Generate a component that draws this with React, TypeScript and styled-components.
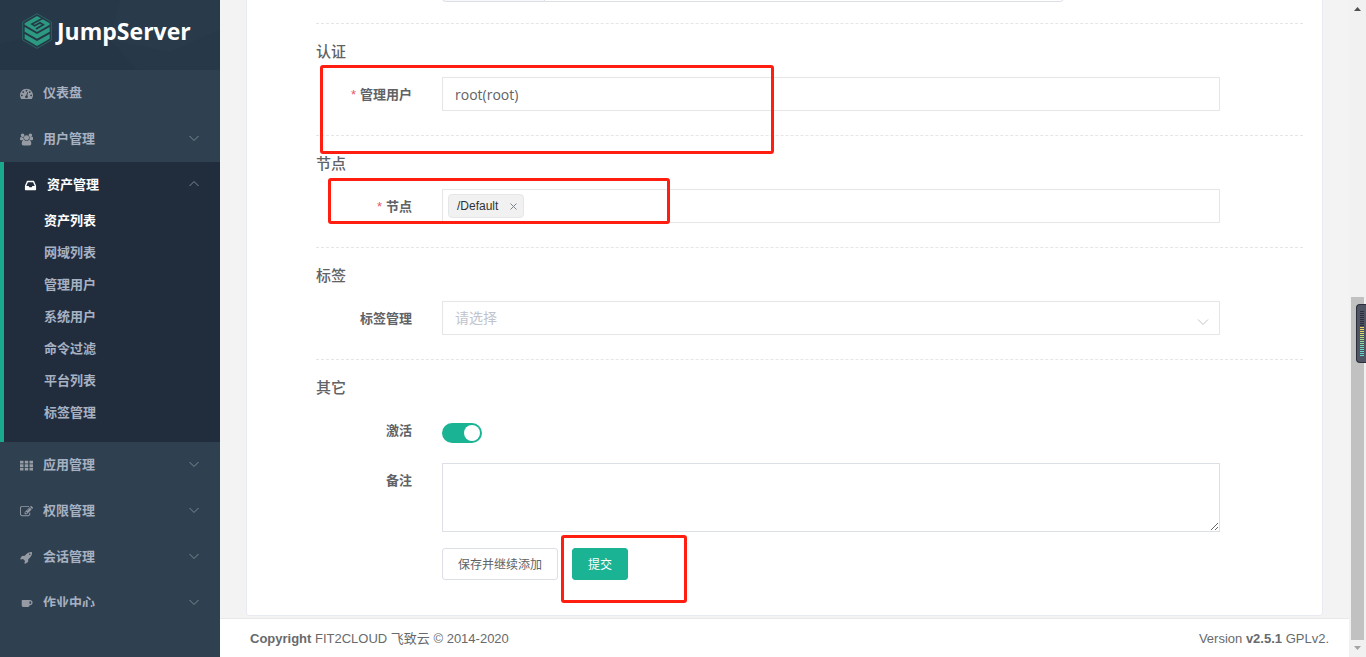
import React from "react";
import styled, { createGlobalStyle } from "styled-components";

const GlobalStyle = createGlobalStyle`
  *, *::before, *::after { box-sizing: border-box; }
  html, body, #root { height: 100%; }
  body {
    margin: 0;
    overflow: hidden;
    background: #f3f3f4;
    color: #606266;
    font-family: "Liberation Sans", "Noto Sans CJK SC", sans-serif;
    font-size: 13px;
  }
  button, input, select, textarea { font: inherit; color: inherit; }
`;

const Shell = styled.div`
  position: relative;
  display: flex;
  height: 100vh;
`;

/* Sidebar */

const Sidebar = styled.aside`
  display: flex;
  flex-direction: column;
  flex: 0 0 220px;
  padding-bottom: 50px;
  background: #2f4050;
`;

const Brand = styled.a`
  position: relative;
  display: flex;
  align-items: center;
  gap: 5px;
  flex: 0 0 70px;
  padding: 0 0 8px 22px;
  overflow: hidden;
  background: #273848;
  color: #fff;
  text-decoration: none;
`;

const BrandFacets = styled.svg`
  position: absolute;
  inset: 0;
  width: 100%;
  height: 100%;
`;

const BrandMark = styled.svg`
  position: relative;
  width: 30px;
  height: 36px;
`;

const BrandName = styled.span`
  position: relative;
  font-family: "Open Sans", "Noto Sans", sans-serif;
  font-size: 23px;
  font-weight: 700;
  line-height: 36px;
`;

const Menu = styled.nav`
  flex: 1 1 0;
  min-height: 0;
  overflow: hidden;
`;

const Group = styled.div<{ $active?: boolean }>`
  border-left: ${(p) => (p.$active ? "4px solid #19aa8d" : "0")};
  background: ${(p) => (p.$active ? "#212d3d" : "transparent")};
  padding-bottom: ${(p) => (p.$active ? "16px" : "0")};
`;

const GroupHead = styled.button<{ $active?: boolean }>`
  display: flex;
  align-items: center;
  gap: 9px;
  width: 100%;
  height: 46px;
  padding: 0 20px;
  border: 0;
  background: none;
  color: ${(p) => (p.$active ? "#fff" : "#a7b1c2")};
  font-weight: 600;
  text-align: left;
  cursor: pointer;
`;

const MenuIcon = styled.svg<{ $active?: boolean }>`
  width: 13px;
  height: 13px;
  margin-right: 1px;
  fill: ${(p) => (p.$active ? "#fff" : "#969ba3")};
`;

const GroupName = styled.span`
  flex: 1;
  padding-bottom: 3px;
`;

const Chevron = styled.svg`
  width: 12px;
  height: 12px;
  fill: none;
  stroke: #7d8790;
`;

const SubMenu = styled.ul`
  display: flex;
  flex-direction: column;
  gap: 6px;
  margin: 0;
  padding: 0 0 0 40px;
  list-style: none;
`;

const SubLink = styled.a<{ $active?: boolean }>`
  display: block;
  height: 26px;
  line-height: 26px;
  color: ${(p) => (p.$active ? "#fff" : "#a7b1c2")};
  font-weight: 600;
  text-decoration: none;
`;

/* Main column */

const Main = styled.main`
  display: flex;
  flex-direction: column;
  flex: 1;
  min-width: 0;
`;

const Viewport = styled.div`
  display: flex;
  flex-direction: column;
  justify-content: flex-end;
  flex: 1;
  min-height: 0;
  padding: 0 26px 2px;
  overflow: hidden;
`;

const Card = styled.form`
  flex: none;
  padding: 0 19px 35px 69px;
  border: 1px solid #e9ebf2;
  border-radius: 3px;
  background: #fff;
`;

const Section = styled.section`
  position: relative;
  border-top: 1px dashed #e4e6e9;
  padding-bottom: 24px;

  &:last-child { padding-bottom: 0; }
`;

const SectionTitle = styled.h3`
  margin: 17px 0 14px;
  font-size: 15px;
  font-weight: 500;
  line-height: 22px;
`;

const Row = styled.div`
  display: grid;
  grid-template-columns: 96px minmax(0, 1fr);
  column-gap: 30px;
  padding-right: 83px;

  & + & { margin-top: 16px; }
`;

const Label = styled.label<{ $required?: boolean }>`
  height: 34px;
  line-height: 36px;
  font-weight: 600;
  text-align: right;

  &::before {
    content: ${(p) => (p.$required ? '"*"' : "none")};
    margin-right: 4px;
    color: #ed5565;
    font-weight: 400;
  }
`;

const TextInput = styled.input`
  width: 100%;
  height: 34px;
  padding: 0 12px;
  border: 1px solid #e5e6e7;
  background: #fff;
  font-family: "Open Sans", "Noto Sans CJK SC", sans-serif;
  font-size: 14px;
  outline: 0;
`;

const TagBox = styled.div`
  display: flex;
  align-items: center;
  height: 34px;
  padding: 0 5px;
  border: 1px solid #e5e6e7;
`;

const Tag = styled.span`
  display: flex;
  align-items: center;
  gap: 11px;
  height: 24px;
  padding: 0 5px 0 8px;
  border: 1px solid #e5e6e7;
  border-radius: 4px;
  background: #f1f1f1;
  color: #303133;
  font-size: 12px;
`;

const TagClose = styled.button`
  display: flex;
  padding: 0;
  border: 0;
  background: none;
  color: #80848b;

  svg { width: 9px; height: 9px; fill: none; stroke: currentColor; }
`;

const TagInput = styled.input`
  flex: 1;
  min-width: 0;
  border: 0;
  background: none;
  outline: 0;
`;

const SelectWrap = styled.div`
  position: relative;
`;

const Select = styled.select`
  display: block;
  width: 100%;
  height: 34px;
  padding: 0 12px;
  border: 1px solid #e5e6e7;
  border-radius: 0;
  background: #fff;
  color: #c0c4cc;
  font-size: 14px;
  appearance: none;
`;

const SelectArrow = styled.svg`
  position: absolute;
  right: 11px;
  top: 15px;
  width: 12px;
  height: 12px;
  fill: none;
  stroke: #c0c4cc;
  pointer-events: none;
`;

const Protocol = styled.div`
  display: grid;
  grid-template-columns: 102px minmax(0, 520px);
  height: 34px;
  margin-bottom: 21px;
`;

const ProtocolName = styled.input`
  min-width: 0;
  border: 1px solid #dcdfe6;
  border-right: 0;
  border-radius: 4px 0 0 4px;
  background: #f5f7fa;
`;

const ProtocolPort = styled.input`
  min-width: 0;
  border: 1px solid #dcdfe6;
  border-radius: 0 4px 4px 0;
  background: #fff;
`;

const Toggle = styled.input`
  position: relative;
  width: 40px;
  height: 20px;
  margin: 10px 0 4px;
  border-radius: 10px;
  background: #1ab394;
  appearance: none;
  cursor: pointer;

  &::after {
    content: "";
    position: absolute;
    top: 2px;
    left: 2px;
    width: 16px;
    height: 16px;
    border-radius: 50%;
    background: #fff;
  }
  &:checked::after { left: 22px; }
  &:not(:checked) { background: #dcdfe6; }
`;

const TextArea = styled.textarea`
  display: block;
  width: 100%;
  height: 69px;
  padding: 5px 15px;
  border: 1px solid #dcdfe6;
  background: #fff;
  resize: vertical;
  outline: 0;
`;

const Actions = styled.div`
  position: relative;
  display: flex;
  gap: 14px;
  grid-column: 2;
`;

const Button = styled.button<{ $primary?: boolean }>`
  height: 32px;
  padding: 0 15px 2px;
  border: 1px solid ${(p) => (p.$primary ? "#1ab394" : "#dcdfe6")};
  border-radius: 3px;
  background: ${(p) => (p.$primary ? "#1ab394" : "#fff")};
  color: ${(p) => (p.$primary ? "#fff" : "#606266")};
  font-size: 12px;
  cursor: pointer;
`;

const Highlight = styled.div<{ $x: number; $y: number; $w: number; $h: number }>`
  position: absolute;
  z-index: 1;
  left: ${(p) => p.$x}px;
  top: ${(p) => p.$y}px;
  width: ${(p) => p.$w}px;
  height: ${(p) => p.$h}px;
  border: 3px solid #ff1e10;
  border-radius: 3px;
  pointer-events: none;
`;

const Footer = styled.footer`
  display: flex;
  justify-content: space-between;
  align-items: baseline;
  flex: 0 0 39px;
  padding: 9px 20px 0 30px;
  border-top: 1px solid #e7eaec;
  background: #fff;
  color: #676a6c;
`;

/* Window scroll bar and the level meter docked over it */

const ScrollTrack = styled.div`
  display: flex;
  flex-direction: column;
  align-items: center;
  flex: 0 0 17px;
  background: #f1f1f1;
`;

const ScrollArrow = styled.svg`
  flex: 0 0 17px;
  width: 17px;
`;

const ScrollLane = styled.div`
  display: flex;
  flex-direction: column;
  justify-content: flex-end;
  flex: 1;
`;

const ScrollThumb = styled.div`
  width: 13px;
  height: 55%;
  background: #c1c1c1;
`;

const Meter = styled.div`
  position: absolute;
  right: 0;
  top: calc(50% - 25px);
  display: flex;
  flex-direction: column;
  gap: 1px;
  width: 10px;
  height: 59px;
  padding: 6px 2px 6px 3px;
  border: 1px solid #2b2e3a;
  border-right: 0;
  border-radius: 4px 0 0 4px;
  background: #505563;
`;

const MeterBar = styled.span<{ $color: string }>`
  width: 4px;
  height: 1px;
  background: ${(p) => p.$color};
`;

type IconDef = { box: string; path: string };

const icons: Record<string, IconDef> = {
  dashboard: {
    box: "0 0 1792 1792",
    path: "M384 1152q0-53-37.5-90.5t-90.5-37.5-90.5 37.5-37.5 90.5 37.5 90.5 90.5 37.5 90.5-37.5 37.5-90.5zm192-448q0-53-37.5-90.5t-90.5-37.5-90.5 37.5-37.5 90.5 37.5 90.5 90.5 37.5 90.5-37.5 37.5-90.5zm428 481l101-382q6-26-7.5-48.5t-38.5-29.5-48 6.5-30 39.5l-101 382q-60 5-107 43.5t-63 98.5q-20 77 20 146t117 89 146-20 89-117q16-60-6-117t-72-91zm660-33q0-53-37.5-90.5t-90.5-37.5-90.5 37.5-37.5 90.5 37.5 90.5 90.5 37.5 90.5-37.5 37.5-90.5zm-640-640q0-53-37.5-90.5t-90.5-37.5-90.5 37.5-37.5 90.5 37.5 90.5 90.5 37.5 90.5-37.5 37.5-90.5zm448 192q0-53-37.5-90.5t-90.5-37.5-90.5 37.5-37.5 90.5 37.5 90.5 90.5 37.5 90.5-37.5 37.5-90.5zm320 448q0 261-141 483-19 29-54 29h-1402q-35 0-54-29-141-221-141-483 0-182 71-348t191-286 286-191 348-71 348 71 286 191 191 286 71 348z",
  },
  users: {
    box: "0 0 1920 1792",
    path: "M593 896q-162 5-265 128h-134q-82 0-138-40.5t-56-118.5q0-353 124-353 6 0 43.5 21t97.5 42.5 119 21.5q67 0 133-23-5 37-5 66 0 159 93 290zm1071 637q0 120-73 189.5t-194 69.5h-874q-121 0-194-69.5t-73-189.5q0-53 3.5-103.5t14-109 26.5-108.5 43-97.5 62-81 85.5-53.5 111.5-20q10 0 43 21.5t73 48 107 48 135 21.5 135-21.5 107-48 73-48 43-21.5q61 0 111.5 20t85.5 53.5 62 81 43 97.5 26.5 108.5 14 109 3.5 103.5zm-1024-1277q0 106-75 181t-181 75-181-75-75-181 75-181 181-75 181 75 75 181zm704 384q0 159-112.5 271.5t-271.5 112.5-271.5-112.5-112.5-271.5 112.5-271.5 271.5-112.5 271.5 112.5 112.5 271.5zm576 225q0 78-56 118.5t-138 40.5h-134q-103-123-265-128 93-131 93-290 0-29-5-66 66 23 133 23 59 0 119-21.5t97.5-42.5 43.5-21q124 0 124 353zm-128-609q0 106-75 181t-181 75-181-75-75-181 75-181 181-75 181 75 75 181z",
  },
  inbox: {
    box: "0 0 1536 1792",
    path: "M1023 960h316q-1-3-2.5-8.5t-2.5-7.5l-212-496h-708l-212 496q-1 3-2.5 8.5t-2.5 7.5h316l95 192h320zm513 30v482q0 26-19 45t-45 19h-1408q-26 0-45-19t-19-45v-482q0-62 25-123l238-552q10-25 36.5-42t52.5-17h832q26 0 52.5 17t36.5 42l238 552q25 61 25 123z",
  },
  grid: {
    box: "0 0 1792 1792",
    path: "M0 256h480v352h-480zM656 256h480v352h-480zM1312 256h480v352h-480zM0 736h480v352h-480zM656 736h480v352h-480zM1312 736h480v352h-480zM0 1216h480v352h-480zM656 1216h480v352h-480zM1312 1216h480v352h-480z",
  },
  edit: {
    box: "0 0 1792 1792",
    path: "M888 1184l116-116-152-152-116 116v56h96v96h56zm440-720q-16-16-33 1l-350 350q-17 17-1 33t33-1l350-350q17-17 1-33zm80 594v190q0 119-84.5 203.5t-203.5 84.5h-832q-119 0-203.5-84.5t-84.5-203.5v-832q0-119 84.5-203.5t203.5-84.5h832q63 0 117 25 15 7 18 23 3 17-9 29l-49 49q-14 14-32 8-23-6-45-6h-832q-66 0-113 47t-47 113v832q0 66 47 113t113 47h832q66 0 113-47t47-113v-126q0-13 9-22l64-64q15-15 35-7t20 29zm-96-738l288 288-672 672h-288v-288zm444 132l-92 92-288-288 92-92q28-28 68-28t68 28l152 152q28 28 28 68t-28 68z",
  },
  rocket: {
    box: "0 0 1792 1792",
    path: "M1440 448q0-40-28-68t-68-28-68 28-28 68 28 68 68 28 68-28 28-68zm224-288q0 249-75.5 430.5t-253.5 360.5q-81 80-195 176l-20 379q-2 16-16 26l-384 224q-7 4-16 4-12 0-23-9l-64-64q-13-14-8-32l85-276-281-281-276 85q-3 1-9 1-14 0-23-9l-64-64q-17-19-5-39l224-384q10-14 26-16l379-20q96-114 176-195 188-187 358-258t431-71q14 0 24 9.5t10 22.5z",
  },
  coffee: {
    box: "0 -128 1920 1792",
    path: "M1664 640q0-80-56-136t-136-56h-64v384h64q80 0 136-56t56-136zm-1664 768h1792q0 106-75 181t-181 75h-1280q-106 0-181-75t-75-181zm1856-768q0 159-112.5 271.5t-271.5 112.5h-64v32q0 92-66 158t-158 66h-704q-92 0-158-66t-66-158v-736q0-26 19-45t45-19h1152q159 0 271.5 112.5t112.5 271.5z",
  },
};

type MenuEntry = { name: string; icon: string; children?: string[]; leaf?: boolean };

const menu: MenuEntry[] = [
  { name: "仪表盘", icon: "dashboard", leaf: true },
  { name: "用户管理", icon: "users" },
  {
    name: "资产管理",
    icon: "inbox",
    children: ["资产列表", "网域列表", "管理用户", "系统用户", "命令过滤", "平台列表", "标签管理"],
  },
  { name: "应用管理", icon: "grid" },
  { name: "权限管理", icon: "edit" },
  { name: "会话管理", icon: "rocket" },
  { name: "作业中心", icon: "coffee" },
];

const meterColors = [
  ...Array(8).fill("#2b2e3a"),
  "#f2d45c", "#f0d860", "#e2dc66", "#d3df70", "#c4df7a", "#b4df84", "#a5de90", "#98dc9c",
  "#8cdba8", "#80dab0", "#76d9b8", "#6ed8c0", "#68d7c6", "#64d6ca", "#62d6cc",
];

function Logo() {
  return (
    <Brand href="#home">
      <BrandFacets viewBox="0 0 220 70" preserveAspectRatio="none" aria-hidden="true">
        <path d="M120 0h100v30l-50 22-60-12z" fill="#293a4a" />
        <path d="M0 44l60-14 50 10 27 30H0z" fill="#253646" />
      </BrandFacets>
      <BrandMark viewBox="0 0 90 108" aria-hidden="true">
        <path d="M45 2l43 25v54L45 106 2 81V27z" fill="none" stroke="#2a7c72" strokeWidth="2" />
        <g fill="#2b9a80">
          <path d="M45 9l38 22v4L45 57 8 35v-4z" />
          <path d="M8 42l37 21 38-21v14L45 77 8 56z" />
          <path d="M8 63l37 21 38-21v14L45 99 8 77z" />
        </g>
        <path d="M64 15L30 33l8 5 16-9 10 6-22 13" fill="none" stroke="#273848" strokeWidth="5" />
      </BrandMark>
      <BrandName>JumpServer</BrandName>
    </Brand>
  );
}

function MenuGroup({ entry }: { entry: MenuEntry }) {
  const open = Boolean(entry.children);
  const icon = icons[entry.icon];
  return (
    <Group $active={open}>
      <GroupHead type="button" $active={open} aria-expanded={entry.leaf ? undefined : open}>
        <MenuIcon $active={open} viewBox={icon.box} aria-hidden="true">
          <path d={icon.path} />
        </MenuIcon>
        <GroupName>{entry.name}</GroupName>
        {!entry.leaf && (
          <Chevron viewBox="0 0 12 12" aria-hidden="true">
            <path d={open ? "M1.5 7L6 2.500 10.500 7" : "M1.5 3L6 7.500 10.500 3"} />
          </Chevron>
        )}
      </GroupHead>
      {entry.children && (
        <SubMenu>
          {entry.children.map((name, i) => (
            <li key={name}>
              <SubLink href="#menu" $active={i === 0}>{name}</SubLink>
            </li>
          ))}
        </SubMenu>
      )}
    </Group>
  );
}

export default function App() {
  return (
    <>
      <GlobalStyle />
      <Shell>
        <Sidebar>
          <Logo />
          <Menu>
            {menu.map((entry) => <MenuGroup key={entry.name} entry={entry} />)}
          </Menu>
        </Sidebar>
        <Main>
          <Viewport>
            <Card onSubmit={(e) => e.preventDefault()}>
              <Row>
                <span />
                <Protocol>
                  <ProtocolName disabled />
                  <ProtocolPort />
                </Protocol>
              </Row>
              <Section>
                <SectionTitle>认证</SectionTitle>
                <Row>
                  <Label htmlFor="admin" $required>管理用户</Label>
                  <TextInput id="admin" defaultValue="root(root)" />
                </Row>
                <Highlight $x={4} $y={41} $w={454} $h={89} />
              </Section>
              <Section>
                <SectionTitle>节点</SectionTitle>
                <Row>
                  <Label htmlFor="nodes" $required>节点</Label>
                  <TagBox>
                    <Tag>
                      /Default
                      <TagClose type="button">
                        <svg viewBox="0 0 9 9"><path d="M1.500 1.500l6 6M7.500 1.500l-6 6" /></svg>
                      </TagClose>
                    </Tag>
                    <TagInput id="nodes" />
                  </TagBox>
                </Row>
                <Highlight $x={12} $y={42} $w={342} $h={46} />
              </Section>
              <Section>
                <SectionTitle>标签</SectionTitle>
                <Row>
                  <Label htmlFor="labels">标签管理</Label>
                  <SelectWrap>
                    <Select id="labels" defaultValue="">
                      <option value="">请选择</option>
                    </Select>
                    <SelectArrow viewBox="0 0 12 12" aria-hidden="true">
                      <path d="M1 3.500l5 5 5-5" />
                    </SelectArrow>
                  </SelectWrap>
                </Row>
              </Section>
              <Section>
                <SectionTitle>其它</SectionTitle>
                <Row>
                  <Label htmlFor="active">激活</Label>
                  <Toggle id="active" type="checkbox" role="switch" defaultChecked />
                </Row>
                <Row>
                  <Label htmlFor="comment">备注</Label>
                  <TextArea id="comment" />
                </Row>
                <Row>
                  <Actions>
                    <Button type="button">保存并继续添加</Button>
                    <Button type="submit" $primary>提交</Button>
                    <Highlight $x={119} $y={-13} $w={126} $h={68} />
                  </Actions>
                </Row>
              </Section>
            </Card>
          </Viewport>
          <Footer>
            <span><strong>Copyright</strong> FIT2CLOUD 飞致云 © 2014-2020</span>
            <span>Version <strong>v2.5.1</strong> GPLv2.</span>
          </Footer>
        </Main>
        <ScrollTrack aria-hidden="true">
          <ScrollArrow viewBox="0 0 17 17"><path d="M5 11h7L8.500 7z" fill="#505050" /></ScrollArrow>
          <ScrollLane><ScrollThumb /></ScrollLane>
          <ScrollArrow viewBox="0 0 17 17"><path d="M5 6h7L8.500 10z" fill="#a3a3a3" /></ScrollArrow>
        </ScrollTrack>
        <Meter aria-hidden="true">
          {meterColors.map((color, i) => <MeterBar key={i} $color={color} />)}
        </Meter>
      </Shell>
    </>
  );
}
